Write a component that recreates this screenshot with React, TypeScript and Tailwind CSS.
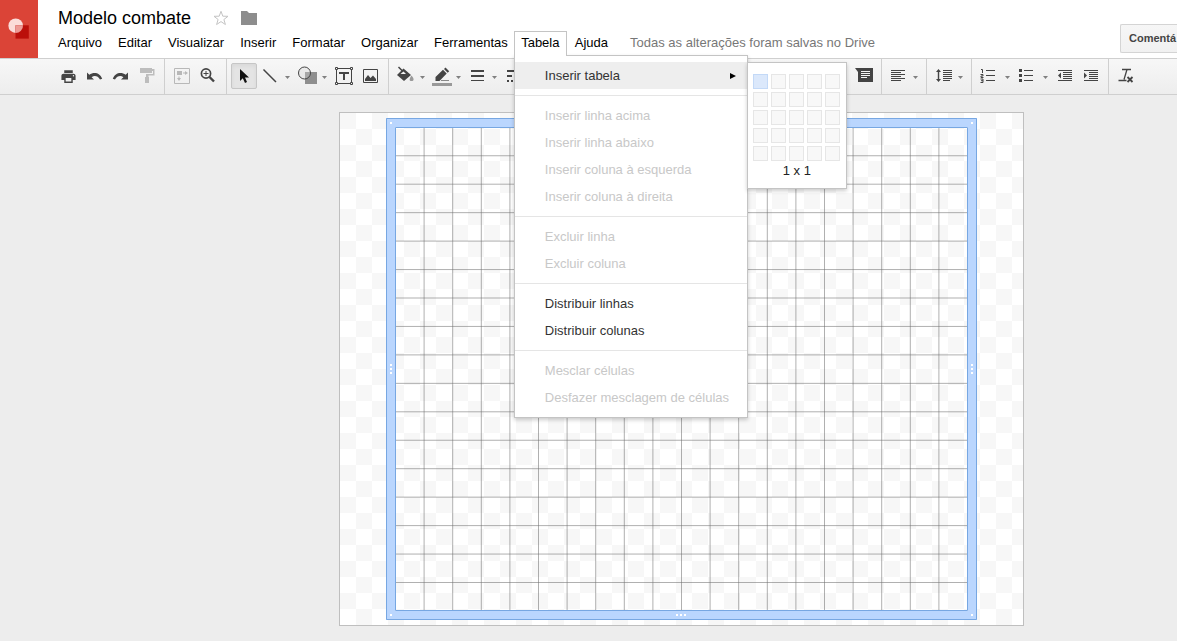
import React from 'react';
import clsx from 'clsx';
import { MdPrint } from 'react-icons/md';

interface ToolProps {
  label: string;
  children: React.ReactNode;
  active?: boolean;
  className?: string;
}

interface MenuEntry {
  label: string;
  disabled?: boolean;
}

const MENUS_BEFORE = ['Arquivo', 'Editar', 'Visualizar', 'Inserir', 'Formatar', 'Organizar', 'Ferramentas'];

const MENU_SECTIONS: MenuEntry[][] = [
  [
    { label: 'Inserir linha acima', disabled: true },
    { label: 'Inserir linha abaixo', disabled: true },
    { label: 'Inserir coluna à esquerda', disabled: true },
    { label: 'Inserir coluna à direita', disabled: true },
  ],
  [
    { label: 'Excluir linha', disabled: true },
    { label: 'Excluir coluna', disabled: true },
  ],
  [{ label: 'Distribuir linhas' }, { label: 'Distribuir colunas' }],
  [
    { label: 'Mesclar células', disabled: true },
    { label: 'Desfazer mesclagem de células', disabled: true },
  ],
];

const COLS = 20;
const ROWS = 17;

const Icon = ({ children }: { children: React.ReactNode }) => (
  <svg width="20" height="20" viewBox="0 0 20 20" fill="currentColor" className="shrink-0" aria-hidden="true">
    {children}
  </svg>
);

const Caret = () => (
  <svg width="5" height="3" viewBox="0 0 5 3" className="mt-0.5 shrink-0" aria-hidden="true">
    <path d="M0 0h5L2.5 3z" fill="#808080" />
  </svg>
);

const Group = ({ children, className }: { children: React.ReactNode; className?: string }) => (
  <div className={clsx('flex h-[35px] shrink-0 border-r border-[#cfcfcf] pt-1 pl-1', className)}>{children}</div>
);

const Tool = ({ label, children, active, className }: ToolProps) => (
  <button
    type="button"
    aria-label={label}
    aria-pressed={active}
    className={clsx(
      'flex h-[26px] w-[26px] shrink-0 items-center justify-center rounded-[2px]',
      active && 'border border-[#c6c6c6] bg-[#e4e4e4] shadow-inner',
      className,
    )}
  >
    {children}
  </button>
);

const SplitTool = ({ label, children, className = 'w-9 gap-1' }: ToolProps) => (
  <button
    type="button"
    aria-label={label}
    className={clsx('flex h-[26px] shrink-0 items-center pl-[3px]', className)}
  >
    {children}
    <Caret />
  </button>
);

const Toolbar = () => (
  <div className="flex h-[37px] border-y border-[#cfcfcf] bg-gradient-to-b from-[#f7f7f7] to-[#ededed] text-[#444]">
    <Group className="pr-[5px] pl-[55px]">
      <Tool label="Imprimir"><MdPrint size={17} /></Tool>
      <Tool label="Desfazer">
        <Icon><path d="M3 6.500v7h7L7.600 11.200c2.600-2 6.400-1.400 8.400 2.300l2.200-.7C16 6.300 9.500 5.500 5.300 8.800z" /></Icon>
      </Tool>
      <Tool label="Refazer">
        <Icon><path d="M18 6.500v7h-7l2.400-2.300c-2.600-2-6.400-1.400-8.400 2.300l-2.200-.7C5 6.300 11.500 5.500 15.700 8.800z" /></Icon>
      </Tool>
      <Tool label="Pintar formatação">
        <Icon>
          <g fill="#bdbdbd">
            <path d="M4 2h12v5H4z" />
            <path d="M16 3h2.500v6.500h-6V11H10V8h7V5h-1z" />
            <path d="M9 11h4v6H9z" />
          </g>
        </Icon>
      </Tool>
    </Group>
    <Group className="pr-[5px]">
      <Tool label="Ajustar zoom">
        <Icon>
          <g fill="#b8b8b8">
            <path d="M2.500 2.500h15v15h-15z" fill="none" stroke="#b8b8b8" />
            <path d="M5 5h5v4H5zM11 6.500h2V5l3 2-3 2V7.500h-2zM6.500 10.500h1V12H9l-2 3-2-3h1.500z" />
          </g>
        </Icon>
      </Tool>
      <Tool label="Zoom">
        <Icon>
          <circle cx="8" cy="7.500" r="4.600" fill="none" stroke="currentColor" strokeWidth="1.700" />
          <path d="M5.500 7h5v1h-5zM7.500 5h1v5h-1z" />
          <path d="M11.500 11l4.500 4.500" stroke="currentColor" strokeWidth="2.400" />
        </Icon>
      </Tool>
    </Group>
    <Group className="pr-[5px]">
      <Tool label="Selecionar" active>
        <Icon><path d="M6 3v12l2.800-2.700L11 17l2-1-2-4.500h4z" fill="#111" /></Icon>
      </Tool>
      <SplitTool label="Linha" className="w-[37px] gap-[5px]">
        <Icon><path d="M3.500 3.500l12.500 12.500" stroke="currentColor" strokeWidth="1.500" /></Icon>
      </SplitTool>
      <SplitTool label="Forma" className="w-[37px] gap-[5px]">
        <Icon>
          <path d="M8 6h12v12H8z" fill="#8e8e8e" />
          <circle cx="7.500" cy="7" r="6" fill="#d8d8d8" fillOpacity=".35" stroke="currentColor" />
        </Icon>
      </SplitTool>
      <Tool label="Caixa de texto">
        <Icon>
          <path d="M2.500 2.500h15v15h-15z" fill="none" stroke="currentColor" />
          <g fill="#f4f4f4" stroke="currentColor">
            <path d="M1.500 1.500h2v2h-2zM16.500 1.500h2v2h-2zM1.500 16.500h2v2h-2zM16.500 16.500h2v2h-2z" />
          </g>
          <path d="M5 6h10v2h-4v6H9V8H5z" />
        </Icon>
      </Tool>
      <Tool label="Imagem">
        <Icon>
          <path d="M3.500 3.500h14v13h-14z" fill="none" stroke="currentColor" />
          <path d="M5 15v-2l3-4 2.500 3 1.500-1.500 1-1 3 3.500v2z" />
        </Icon>
      </Tool>
    </Group>
    <Group>
      <SplitTool label="Cor de preenchimento">
        <Icon>
          <path d="M1 9l6.500-6.500L15 9l-7 6z" />
          <path d="M2.500 1l5.500 5.500" stroke="currentColor" strokeWidth="1.500" />
          <path d="M4.500 8h5.500L7.500 5.500z" fill="#f4f4f4" />
          <path d="M15.500 9.500c3 3.500 2.500 5.500 0 5.500s-2.500-2 0-5.500z" fill="#999" />
        </Icon>
      </SplitTool>
      <SplitTool label="Cor da linha">
        <Icon>
          <path d="M3.500 15v-4L11 3.800 14.700 7.500 7.500 15zM12 3l1.500-1.500 3.700 3.700L15.700 6.700z" />
          <path d="M9 14.500h8" stroke="#888" />
          <path d="M0 17h20v3H0z" fill="#999" />
        </Icon>
      </SplitTool>
      <SplitTool label="Espessura da linha">
        <Icon><path d="M3 4h13v2H3zM3 9h13v2H3zM3 14h13v1H3z" /></Icon>
      </SplitTool>
      <SplitTool label="Traço da linha">
        <Icon><path d="M3 4h13v2H3zM3 9h5v2H3zM10 9h5v2h-5zM3 14h2v2H3zM7 14h2v2H7zM11 14h2v2h-2z" /></Icon>
      </SplitTool>
    </Group>
    <Group className="ml-[309px] pr-1">
      <Tool label="Adicionar comentário">
        <Icon>
          <path d="M1 2h18v14H4V6z" />
          <path d="M7 5.500h9M7 7.500h9M7 9.500h9M7 11.500h6" stroke="#f4f4f4" />
        </Icon>
      </Tool>
    </Group>
    <Group className="pl-[3px] pr-1">
      <SplitTool label="Alinhar" className="w-[37px] gap-[5px]">
        <Icon><path d="M3 4h14v1H3zM3 6h10v1H3zM3 8h14v1H3zM3 10h10v1H3zM3 12h14v1H3zM3 14h10v1H3z" /></Icon>
      </SplitTool>
    </Group>
    <Group className="pr-1">
      <SplitTool label="Espaçamento entre linhas">
        <Icon>
          <path d="M4.500 3L7 6H5.200v7H7l-2.500 3L2 13h1.800V6H2z" />
          <path d="M9 4h9v1H9zM9 6h9v1H9zM9 8h9v1H9zM9 10h9v1H9zM9 12h9v1H9zM9 14h7v1H9z" />
        </Icon>
      </SplitTool>
    </Group>
    <Group className="pr-1">
      <SplitTool label="Lista numerada" className="w-[38px] gap-[6px]">
        <Icon>
          <path d="M7 4h9v1H7zM7 9h9v1H7zM7 14h9v1H7z" />
          <path
            d="M2 3.500h1.500V7M1.500 8.500h2.500v1.500H2v1.500h2.500M1.500 13h2.500v3.500H1.500M2 14.700h2"
            fill="none"
            stroke="currentColor"
          />
        </Icon>
      </SplitTool>
      <SplitTool label="Lista com marcadores" className="w-[38px] gap-[6px]">
        <Icon><path d="M2 3h3v3H2zM2 8h3v3H2zM2 13h3v3H2zM7 4h9v1H7zM7 9h9v1H7zM7 14h9v1H7z" /></Icon>
      </SplitTool>
      <Tool label="Diminuir recuo">
        <Icon>
          <path d="M3 4h14v1H3zM8 6h9v1H8zM8 8h9v1H8zM8 10h9v1H8zM8 12h9v1H8zM3 14h14v1H3z" />
          <path d="M6 6.500v6l-3-3z" />
        </Icon>
      </Tool>
      <Tool label="Aumentar recuo">
        <Icon>
          <path d="M3 4h14v1H3zM8 6h9v1H8zM8 8h9v1H8zM8 10h9v1H8zM8 12h9v1H8zM3 14h14v1H3z" />
          <path d="M3 6.500v6l3-3z" />
        </Icon>
      </Tool>
    </Group>
    <div className="pt-1 pl-1">
      <Tool label="Limpar formatação">
        <Icon>
          <path d="M6 3.500h9M11 3.500L8 13.500M2.500 14.500h8" fill="none" stroke="currentColor" strokeWidth="1.300" />
          <path d="M11.500 11l5 5M16.500 11l-5 5" stroke="currentColor" strokeWidth="1.800" />
        </Icon>
      </Tool>
    </div>
  </div>
);

const SizePicker = () => (
  <div className="absolute top-[6px] left-full w-[100px] border border-[#c4c4c4] bg-white px-[5px] pt-[11px] pb-[7px] shadow-[0_2px_4px_rgba(0,0,0,0.2)]">
    <div className="grid grid-cols-[repeat(5,15px)] gap-[3px]">
      {Array.from({ length: 25 }, (_, i) => (
        <button
          key={i}
          type="button"
          aria-label={`${(i % 5) + 1} x ${Math.floor(i / 5) + 1}`}
          className={clsx(
            'h-[15px] border',
            i === 0 ? 'border-[#c3d9f7] bg-[#dbe8fb]' : 'border-[#e6e6e6] bg-[#f8f8f8]',
          )}
        />
      ))}
    </div>
    <div className="text-center text-[13px] leading-5 text-[#222]">1 x 1</div>
  </div>
);

const TableMenu = () => (
  <div className="absolute top-6 left-0 z-10 w-[234px] border border-[#c4c4c4] bg-white py-[6px] shadow-[0_2px_4px_rgba(0,0,0,0.2)]">
    <button
      type="button"
      className="flex h-[27px] w-full items-center justify-between bg-[#eee] pr-[11px] pl-[30px] text-[#333]"
    >
      Inserir tabela
      <svg width="6" height="6" viewBox="0 0 6 6" aria-hidden="true"><path d="M0 0l6 3-6 3z" /></svg>
    </button>
    {MENU_SECTIONS.map((section, idx) => (
      <div key={idx} className="mt-[6px] border-t border-[#e5e5e5] pt-[6px]">
        {section.map((item) => (
          <button
            key={item.label}
            type="button"
            disabled={item.disabled}
            className={clsx(
              'flex h-[27px] w-full items-center pl-[30px] whitespace-nowrap',
              item.disabled ? 'text-[#c8c8c8]' : 'text-[#333]',
            )}
          >
            {item.label}
          </button>
        ))}
      </div>
    ))}
    <SizePicker />
  </div>
);

const Header = () => (
  <header className="flex h-[58px] bg-white">
    <div className="flex w-[38px] shrink-0 items-center justify-center bg-[#db4437]">
      <svg width="38" height="58" viewBox="0 0 38 58" aria-hidden="true">
        <circle cx="15.700" cy="25.700" r="7.300" fill="#fbdcd9" />
        <path d="M15.500 25.300h13.300v13.300H15.500z" fill="#bb0f0a" />
        <path d="M15.500 25.300H23a7.300 7.300 0 0 1-7.500 7.700z" fill="#ec9a95" />
      </svg>
    </div>
    <div className="ml-3 shrink-0 pt-2">
      <div className="flex h-5 items-center pl-2">
        <h1 className="text-lg leading-5">Modelo combate</h1>
        <button type="button" aria-label="Marcar com estrela" className="ml-[22px]">
          <svg width="16" height="16" viewBox="0 0 16 16" fill="none" stroke="#c4c4c4" aria-hidden="true">
            <path d="M8 1.300l1.800 4.900 5.200.1-4.100 3.200 1.500 5L8 11.600l-4.400 2.900 1.500-5L1 6.300l5.200-.1z" />
          </svg>
        </button>
        <button type="button" aria-label="Mover para pasta" className="ml-3">
          <svg width="16" height="14" viewBox="0 0 16 14" aria-hidden="true">
            <path d="M0 0h6l2 2h8v12H0z" fill="#8d8d8d" />
          </svg>
        </button>
      </div>
      <nav className="mt-[3px] flex h-6 items-start text-[13px] leading-6">
        {MENUS_BEFORE.map((name) => (
          <button key={name} type="button" className="px-2">{name}</button>
        ))}
        <div className="relative -ml-0.5">
          <button
            type="button"
            aria-expanded="true"
            className="relative z-20 block h-[25px] w-[53px] border border-b-0 border-[#c4c4c4] bg-white pb-0.5 text-center leading-[22px]"
          >
            Tabela
          </button>
          <TableMenu />
        </div>
        <button type="button" className="px-2">Ajuda</button>
        <span className="ml-[14px] text-[#777]">Todas as alterações foram salvas no Drive</span>
      </nav>
    </div>
    <button
      type="button"
      aria-label="Comentários"
      className="mt-6 ml-auto h-[29px] w-[57px] shrink-0 rounded-l-[2px] border border-r-0 border-[#d4d4d4] bg-gradient-to-b from-[#f6f6f6] to-[#f1f1f1] pl-2 text-left text-[11px] font-bold text-[#444]"
    >
      Comentá
    </button>
  </header>
);

const Drawing = () => (
  <svg width="683" height="512" viewBox="0 0 683 512" role="img" aria-label="Tabela">
    <defs>
      <pattern id="checker" width="32" height="32" patternUnits="userSpaceOnUse">
        <path d="M0 0h32v32H0z" fill="#fff" />
        <path d="M0 0h16v16H0zM16 16h16v16H16z" fill="#f7f7f7" />
      </pattern>
    </defs>
    <rect width="683" height="512" fill="url(#checker)" />
    <g stroke="#707070" strokeOpacity=".55">
      {Array.from({ length: COLS - 1 }, (_, i) => {
        const x = 55.5 + (i + 1) * 28.6;
        return <line key={i} x1={x} x2={x} y1="15" y2="497" />;
      })}
      {Array.from({ length: ROWS - 1 }, (_, i) => {
        const y = 14.3 + (i + 1) * 28.45;
        return <line key={i} x1="56" x2="627" y1={y} y2={y} />;
      })}
    </g>
    {/* Selection frame */}
    <path d="M46 5h591v502H46zM55 14v484h573V14z" fillRule="evenodd" fill="#b2d2fe" fillOpacity=".9" />
    <path d="M46.500 5.500h590v501h-590zM55.500 14.500h572v483h-572z" fill="none" stroke="#77a7e2" />
    {/* Grips */}
    <path
      d="M50 9h2v2h-2zM631 9h2v2h-2zM50 501h2v2h-2zM631 501h2v2h-2zM50 251h2v2h-2zM50 255h2v2h-2zM50 259h2v2h-2zM631 251h2v2h-2zM631 255h2v2h-2zM631 259h2v2h-2zM336 501h2v2h-2zM340 501h2v2h-2zM344 501h2v2h-2z"
      fill="#fff"
    />
  </svg>
);

export default function App() {
  return (
    <div className="flex min-h-screen flex-col overflow-x-clip bg-[#ededed] font-['Liberation_Sans',Arial,sans-serif] text-black">
      <Header />
      <Toolbar />
      <main className="flex-1 pt-[17px] pb-[15px] pl-[339px]">
        <div className="w-fit border border-[#bfbfbf]">
          <Drawing />
        </div>
      </main>
    </div>
  );
}
